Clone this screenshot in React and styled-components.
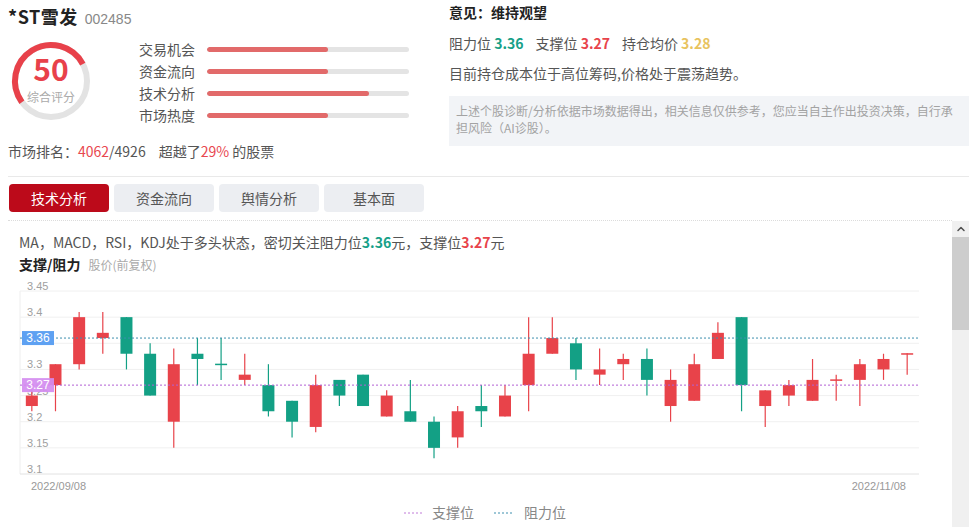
import React from "react";
import styled, { createGlobalStyle } from "styled-components";
import { ChevronUp } from "lucide-react";

const GlobalStyle = createGlobalStyle`
  html, body {
    margin: 0;
    padding: 0;
    overflow: hidden;
    background: #fff;
  }
  body {
    font-family: "Noto Sans CJK SC", "Noto Sans", sans-serif;
    color: #333;
  }
`;

const Page = styled.div`
  width: 973px;
  height: 527px;
  box-sizing: border-box;
  padding: 0 4px 0 8px;
  overflow: hidden;
`;

const Top = styled.div`
  display: grid;
  grid-template-columns: 441px 1fr;
  height: 163px;
`;

const Left = styled.div`
  display: flex;
  flex-direction: column;
`;

const Title = styled.div`
  margin-top: 3px;
  line-height: 27px;
  display: flex;
  align-items: baseline;
  gap: 7px;
`;

const Name = styled.span`
  font-size: 18px;
  font-weight: 700;
  color: #222;
  letter-spacing: 0.5px;
`;

const Code = styled.span`
  font-size: 14px;
  color: #888;
  font-family: "Liberation Sans", sans-serif;
`;

const ScoreRow = styled.div`
  margin-top: 5px;
  display: flex;
  align-items: flex-start;
`;

const Gauge = styled.div`
  display: grid;
  width: 86px;
  height: 86px;
  & > * {
    grid-area: 1 / 1;
  }
`;

const GaugeText = styled.div`
  display: flex;
  flex-direction: column;
  align-items: center;
  padding-top: 15px;
`;

const Score = styled.span`
  font-size: 30px;
  line-height: 30px;
  font-weight: 700;
  color: #e8414a;
`;

const ScoreLabel = styled.span`
  margin-top: 6px;
  font-size: 12px;
  line-height: 16px;
  color: #aaa;
`;

const Bars = styled.div`
  margin-left: 45px;
  display: flex;
  flex-direction: column;
`;

const BarRow = styled.div`
  height: 22px;
  display: flex;
  align-items: center;
  gap: 12px;
`;

const BarLabel = styled.span`
  width: 56px;
  font-size: 14px;
  color: #555;
`;

const Track = styled.div`
  width: 202px;
  height: 5px;
  border-radius: 3px;
  background: #e4e4e4;
  overflow: hidden;
`;

const Fill = styled.div`
  height: 100%;
  border-radius: 3px;
  background: #e26a6a;
  width: ${(p) => p.$value}%;
`;

const Rank = styled.div`
  margin-top: 14px;
  line-height: 22px;
  font-size: 14px;
  color: #555;
`;

const Red = styled.span`
  color: #e8474f;
`;

const Gap = styled.span`
  display: inline-block;
  width: 13px;
`;

const Right = styled.div`
  display: flex;
  flex-direction: column;
`;

const Opinion = styled.div`
  margin-top: 1px;
  line-height: 22px;
  font-size: 14px;
  font-weight: 700;
  color: #222;
`;

const Levels = styled.div`
  margin-top: 9px;
  line-height: 22px;
  font-size: 14px;
  color: #555;
  display: flex;
  gap: 12px;
`;

const Num = styled.b`
  font-weight: 600;
  color: ${(p) => p.$color};
`;

const Summary = styled.div`
  margin-top: 8px;
  line-height: 22px;
  font-size: 14px;
  color: #555;
`;

const Notice = styled.div`
  margin-top: 12px;
  height: 50px;
  box-sizing: border-box;
  padding: 6px 7px;
  background: #f2f4f7;
  font-size: 12px;
  line-height: 17px;
  color: #a3a3a3;
`;

const Divider = styled.div`
  margin-top: 13px;
  border-top: 1px solid #e9e9e9;
`;

const Tabs = styled.div`
  margin: 7px 0 8px 1px;
  display: flex;
  gap: 5px;
`;

const Tab = styled.div`
  width: 100px;
  height: 28px;
  border-radius: 4px;
  display: flex;
  align-items: center;
  justify-content: center;
  font-size: 14px;
  background: ${(p) => (p.$active ? "#bc0a1a" : "#eceef2")};
  color: ${(p) => (p.$active ? "#fff" : "#555")};
`;

const ScrollArea = styled.div`
  display: flex;
  height: 307px;
`;

const Content = styled.div`
  flex: 1;
  border-top: 1px dotted #dcdcdc;
  padding-top: 10px;
  overflow: hidden;
`;

const Line = styled.div`
  padding-left: 11px;
  line-height: 22px;
  font-size: 14px;
  color: #555;
`;

const SubTitle = styled.b`
  font-weight: 700;
  color: #222;
`;

const SubNote = styled.span`
  margin-left: 8px;
  font-size: 12px;
  color: #aaa;
`;

const Scrollbar = styled.div`
  width: 17px;
  margin-top: 1px;
  background: #f0f0f0;
  display: flex;
  flex-direction: column;
`;

const ScrollButton = styled.div`
  height: 16px;
  display: flex;
  align-items: center;
  justify-content: center;
  color: #505050;
`;

const Thumb = styled.div`
  height: 93px;
  background: #cdcdcd;
`;

const candles = [
  [3.23, 3.25, 3.26, 3.22],
  [3.27, 3.31, 3.31, 3.22],
  [3.31, 3.4, 3.41, 3.3],
  [3.36, 3.37, 3.41, 3.33],
  [3.4, 3.33, 3.4, 3.3],
  [3.33, 3.25, 3.35, 3.25],
  [3.2, 3.31, 3.34, 3.15],
  [3.33, 3.32, 3.36, 3.27],
  [3.311, 3.309, 3.36, 3.28],
  [3.28, 3.29, 3.33, 3.27],
  [3.27, 3.22, 3.31, 3.21],
  [3.24, 3.2, 3.24, 3.17],
  [3.19, 3.27, 3.29, 3.18],
  [3.28, 3.25, 3.28, 3.23],
  [3.29, 3.23, 3.29, 3.23],
  [3.21, 3.25, 3.26, 3.21],
  [3.22, 3.2, 3.28, 3.2],
  [3.2, 3.15, 3.21, 3.13],
  [3.17, 3.22, 3.23, 3.15],
  [3.23, 3.22, 3.27, 3.19],
  [3.21, 3.25, 3.27, 3.21],
  [3.27, 3.33, 3.4, 3.22],
  [3.33, 3.36, 3.4, 3.33],
  [3.35, 3.3, 3.36, 3.28],
  [3.29, 3.3, 3.34, 3.27],
  [3.31, 3.32, 3.33, 3.28],
  [3.32, 3.28, 3.34, 3.25],
  [3.23, 3.28, 3.3, 3.2],
  [3.24, 3.31, 3.33, 3.24],
  [3.32, 3.37, 3.39, 3.32],
  [3.4, 3.27, 3.4, 3.22],
  [3.23, 3.26, 3.26, 3.19],
  [3.25, 3.27, 3.28, 3.23],
  [3.24, 3.28, 3.32, 3.24],
  [3.279, 3.281, 3.29, 3.24],
  [3.28, 3.31, 3.32, 3.23],
  [3.3, 3.32, 3.33, 3.28],
  [3.33, 3.331, 3.331, 3.29],
];

const PLOT_L = 20;
const PLOT_R = 919;
const PLOT_T = 290;
const PLOT_B = 473;
const yOf = (v) => PLOT_T + (3.45 - v) * ((PLOT_B - PLOT_T) / 0.35);
const ticks = [3.45, 3.4, 3.35, 3.3, 3.25, 3.2, 3.15, 3.1];
const UP = "#e8434a";
const DOWN = "#13a085";
const AXIS_FONT = "Liberation Sans, sans-serif";

const KChart = () => {
  const step = (PLOT_R - PLOT_L) / candles.length;
  return (
    <svg width="944" height="252" viewBox="8 275 944 252" style={{ display: "block" }}>
      <line x1={PLOT_L} y1={PLOT_T} x2={PLOT_L} y2={PLOT_B} stroke="#eeeeee" />
      {ticks.map((t) => (
        <g key={t}>
          <line
            x1={PLOT_L}
            x2={PLOT_R}
            y1={yOf(t)}
            y2={yOf(t)}
            stroke={t === 3.1 ? "#e2e2e2" : "#f0f0f0"}
          />
          <text x="27" y={yOf(t) - 1} fontSize="11" fill="#a0a0a0" fontFamily={AXIS_FONT}>
            {t}
          </text>
        </g>
      ))}
      {candles.map(([o, c, h, l], i) => {
        const cx = PLOT_L + (i + 0.5) * step;
        const color = c >= o ? UP : DOWN;
        const top = yOf(Math.max(o, c));
        const bh = Math.max(1.5, yOf(Math.min(o, c)) - top);
        return (
          <g key={i}>
            <line x1={cx} x2={cx} y1={yOf(h)} y2={yOf(l)} stroke={color} strokeWidth="1.2" />
            <rect x={cx - 6} y={top} width="12" height={bh} fill={color} />
          </g>
        );
      })}
      <line x1={PLOT_L} x2={PLOT_R} y1={yOf(3.36)} y2={yOf(3.36)} stroke="#3d8fae" strokeDasharray="2 2" />
      <line x1={PLOT_L} x2={PLOT_R} y1={yOf(3.27)} y2={yOf(3.27)} stroke="#b25fd4" strokeDasharray="2 2" />
      <rect x="22" y={yOf(3.36) - 7} width="32" height="14" fill="#5ea1f2" />
      <text x="38" y={yOf(3.36) + 4} fontSize="12" fill="#fff" textAnchor="middle" fontFamily={AXIS_FONT}>
        3.36
      </text>
      <rect x="22" y={yOf(3.27) - 7} width="32" height="14" fill="#d48cf0" opacity="0.92" />
      <text x="38" y={yOf(3.27) + 4} fontSize="12" fill="#fff" textAnchor="middle" fontFamily={AXIS_FONT}>
        3.27
      </text>
      <text x="31" y="489" fontSize="11" fill="#999" fontFamily={AXIS_FONT}>
        2022/09/08
      </text>
      <text x="906" y="489" fontSize="11" fill="#999" textAnchor="end" fontFamily={AXIS_FONT}>
        2022/11/08
      </text>
      <line x1="404" x2="423" y1="512" y2="512" stroke="#c07ad8" strokeDasharray="2 2" />
      <text x="432" y="517" fontSize="14" fill="#888" fontFamily="Noto Sans CJK SC, sans-serif">
        支撑位
      </text>
      <line x1="494" x2="513" y1="512" y2="512" stroke="#3d8fae" strokeDasharray="2 2" />
      <text x="524" y="517" fontSize="14" fill="#888" fontFamily="Noto Sans CJK SC, sans-serif">
        阻力位
      </text>
    </svg>
  );
};

const GaugeRing = ({ value }) => {
  const r = 36;
  const c = 43;
  const start = 234;
  const end = 422;
  const pt = (deg) => {
    const a = (deg * Math.PI) / 180;
    return [c + r * Math.sin(a), c - r * Math.cos(a)];
  };
  const [sx, sy] = pt(start);
  const [ex, ey] = pt(end);
  return (
    <svg width="86" height="86" viewBox="0 0 86 86" data-value={value}>
      <circle cx={c} cy={c} r={r} fill="none" stroke="#e3e3e3" strokeWidth="6" />
      <path
        d={`M ${sx} ${sy} A ${r} ${r} 0 ${end - start > 180 ? 1 : 0} 1 ${ex} ${ey}`}
        fill="none"
        stroke="#e8414a"
        strokeWidth="6"
      />
    </svg>
  );
};

const factors = [
  ["交易机会", 60],
  ["资金流向", 60],
  ["技术分析", 80],
  ["市场热度", 60],
];

const tabs = ["技术分析", "资金流向", "舆情分析", "基本面"];

export default function App() {
  return (
    <Page>
      <GlobalStyle />
      <Top>
        <Left>
          <Title>
            <Name>*ST雪发</Name>
            <Code>002485</Code>
          </Title>
          <ScoreRow>
            <Gauge>
              <GaugeRing value={50} />
              <GaugeText>
                <Score>50</Score>
                <ScoreLabel>综合评分</ScoreLabel>
              </GaugeText>
            </Gauge>
            <Bars>
              {factors.map(([label, v]) => (
                <BarRow key={label}>
                  <BarLabel>{label}</BarLabel>
                  <Track>
                    <Fill $value={v} />
                  </Track>
                </BarRow>
              ))}
            </Bars>
          </ScoreRow>
          <Rank>
            市场排名：<Red>4062</Red>/4926<Gap />超越了<Red>29%</Red> 的股票
          </Rank>
        </Left>
        <Right>
          <Opinion>意见：维持观望</Opinion>
          <Levels>
            <span>
              阻力位 <Num $color="#16a088">3.36</Num>
            </span>
            <span>
              支撑位 <Num $color="#e8434a">3.27</Num>
            </span>
            <span>
              持仓均价 <Num $color="#e8c35e">3.28</Num>
            </span>
          </Levels>
          <Summary>目前持仓成本位于高位筹码,价格处于震荡趋势。</Summary>
          <Notice>
            上述个股诊断/分析依据市场数据得出，相关信息仅供参考，您应当自主作出投资决策，自行承
            <br />
            担风险（AI诊股）。
          </Notice>
        </Right>
      </Top>
      <Divider />
      <Tabs>
        {tabs.map((t, i) => (
          <Tab key={t} $active={i === 0}>
            {t}
          </Tab>
        ))}
      </Tabs>
      <ScrollArea>
        <Content>
          <Line>
            MA，MACD，RSI，KDJ处于多头状态，密切关注阻力位<Num $color="#16a088">3.36</Num>元，支撑位
            <Num $color="#e8434a">3.27</Num>元
          </Line>
          <Line>
            <SubTitle>支撑/阻力</SubTitle>
            <SubNote>股价(前复权)</SubNote>
          </Line>
          <KChart />
        </Content>
        <Scrollbar>
          <ScrollButton>
            <ChevronUp size={12} strokeWidth={3} />
          </ScrollButton>
          <Thumb />
        </Scrollbar>
      </ScrollArea>
    </Page>
  );
}
